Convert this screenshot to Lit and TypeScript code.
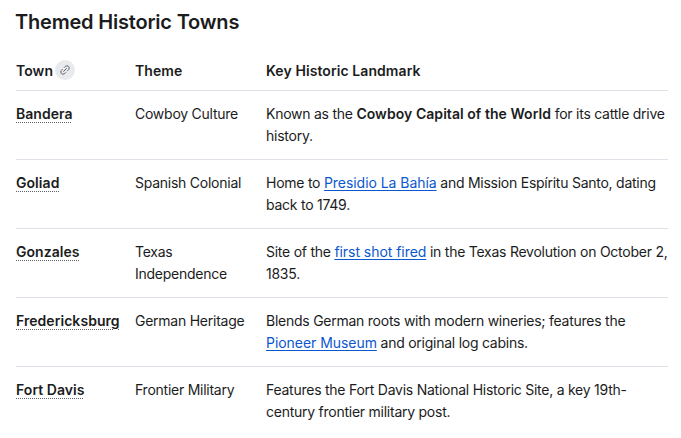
import { LitElement, html, css } from "lit";
import { customElement } from "lit/decorators.js";

const link = (t: string) => html`<a href="#">${t}</a>`;

const rows = [
  { town: "Bandera", theme: "Cowboy Culture", note: html`Known as the <b>Cowboy Capital of the World</b> for its cattle drive history.` },
  { town: "Goliad", theme: "Spanish Colonial", note: html`Home to ${link("Presidio La Bahía")} and Mission Espíritu Santo, dating back to 1749.` },
  { town: "Gonzales", theme: "Texas Independence", note: html`Site of the ${link("first shot fired")} in the Texas Revolution on October 2, 1835.` },
  { town: "Fredericksburg", theme: "German Heritage", note: html`Blends German roots with modern wineries; features the ${link("Pioneer Museum")} and original log cabins.` },
  { town: "Fort Davis", theme: "Frontier Military", note: html`Features the Fort Davis National Historic Site, a key 19th-century frontier military post.` },
];

@customElement("app-root")
export class AppRoot extends LitElement {
  static styles = css`
    :host { display: block; width: 681px; height: 438px; overflow: hidden; background: #fff; color: #1b1c1d; font-family: Inter, "Noto Sans", sans-serif; font-size: 14px; line-height: 22px; letter-spacing: -0.25px; }
    h2 { margin: 0; padding: 8px 16px 0 15px; font-size: 20px; line-height: 28px; font-weight: 600; letter-spacing: -0.2px; color: #1b1c1d; }
    table { margin: 16px 13px 0 16px; width: 652px; border-collapse: collapse; table-layout: fixed; }
    th, td { text-align: left; vertical-align: top; padding: 12px 16px 12px 0; border-bottom: 1px solid #dfe0e8; }
    tr:last-child td { border-bottom: none; }
    th { font-weight: 600; letter-spacing: 0.08px; padding: 8px 0; vertical-align: middle; }
    td:last-child { padding-right: 0; }
    .c1 { width: 119px; } .c2 { width: 131px; }
    .head { display: flex; align-items: center; gap: 2px; height: 22px; }
    .chip { width: 20px; height: 20px; border-radius: 50%; background: #e9eaee; display: flex; align-items: center; justify-content: center; margin-top: -2px; }
    .chip svg { display: block; }
    .town { font-weight: 600; letter-spacing: 0.05px; text-decoration: underline dotted #5f6368 1px; text-underline-offset: 3px; }
    b { font-weight: 600; letter-spacing: 0.05px; }
    a { color: #0b57d0; letter-spacing: -0.05px; text-decoration: underline; text-underline-offset: 2px; }
  `;
  render() {
    return html`
      <h2>Themed Historic Towns</h2>
      <table>
        <thead><tr>
          <th class="c1"><div class="head">Town <span class="chip">
            <svg width="14" height="14" viewBox="0 0 14 14" fill="none" stroke="#5f6368" stroke-width="1" stroke-linecap="round">
              <path d="M5.6 8.4 8.4 5.6M6.4 4.4 7.6 3.2a2.3 2.3 0 0 1 3.2 3.2L9.6 7.6M7.6 9.6l-1.2 1.2a2.3 2.3 0 0 1-3.2-3.2L4.4 6.4" />
            </svg></span></div></th>
          <th class="c2">Theme</th>
          <th>Key Historic Landmark</th>
        </tr></thead>
        <tbody>
          ${rows.map((r) => html`<tr><td><span class="town">${r.town}</span></td><td>${r.theme}</td><td>${r.note}</td></tr>`)}
        </tbody>
      </table>
    `;
  }
}
